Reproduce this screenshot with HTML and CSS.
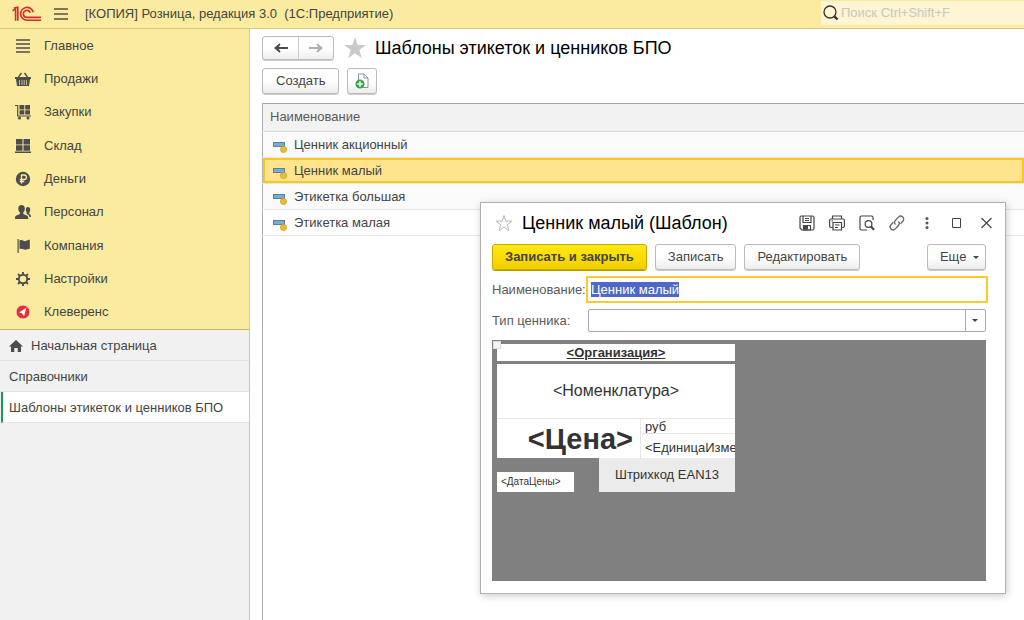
FILE: index.html
```html
<!DOCTYPE html>
<html lang="ru">
<head>
  <meta charset="UTF-8">
  <meta name="viewport" content="width=device-width, initial-scale=1.0">
  <title>Розница, редакция 3.0</title>
  <link rel="stylesheet" href="styles.css">
</head>
<body>
  <header class="topbar">
    <svg class="logo" width="30" height="16" viewBox="0 0 30 16" fill="none" stroke="#e0262b" stroke-width="1.6">
      <path d="M.6 4.800 3.600 2.400V14.800M2 2 5.800 1.200V14.800"/>
      <path d="M21.200 6.200A6.400 6.400 0 1 0 15 14.200H29"/>
      <path d="M18.200 6.800A3.500 3.500 0 1 0 15 11.400H29"/>
    </svg>
    <button class="menu-btn" aria-label="Меню">
      <svg width="14" height="12" viewBox="0 0 14 12" stroke="#55513f" stroke-width="1.300"><path d="M0 1h14M0 6h14M0 11h14"/></svg>
    </button>
    <span class="app-title">[КОПИЯ] Розница, редакция 3.0&nbsp; (1С:Предприятие)</span>
    <label class="search">
      <svg width="16" height="16" viewBox="0 0 16 16" fill="none" stroke="#333"><circle cx="7" cy="7" r="6" stroke-width="1.300"/><path d="m11.500 11.500 3 3" stroke-width="2.400"/></svg>
      <input type="text" placeholder="Поиск Ctrl+Shift+F" aria-label="Поиск">
    </label>
  </header>

  <div class="layout">
    <aside class="sidebar">
      <nav class="sections">
        <a href="#">
          <svg width="16" height="16" viewBox="0 0 16 16" stroke="#4d4d4d" stroke-width="1.600"><path d="M1 2h14M1 6h14M1 10h14M1 14h14"/></svg>
          Главное
        </a>
        <a href="#">
          <svg width="16" height="16" viewBox="0 0 16 16" fill="#4d4d4d"><path d="M0 6h16v2H0zM1 8h14l-1 7H2z"/><path d="m3.500 6 3-4M12.500 6l-3-4" stroke="#4d4d4d" stroke-width="1.300"/><path d="M4.500 9v5M7 9v5M9.200 9v5M11.500 9v5" stroke="#faeb9e" stroke-width=".7"/></svg>
          Продажи
        </a>
        <a href="#">
          <svg width="16" height="16" viewBox="0 0 16 16" fill="#4d4d4d"><path d="M4.500 1h4.800v4.400H4.500zM10.200 1H15v4.400h-4.800zM4.500 6.200h4.800v4.400H4.500zM10.200 6.200H15v4.400h-4.800z"/><path d="M0 1.500h2.700V12H16" fill="none" stroke="#4d4d4d" stroke-width="1.200"/><circle cx="4.500" cy="14" r="1.500"/><circle cx="13" cy="14" r="1.500"/></svg>
          Закупки
        </a>
        <a href="#">
          <svg width="16" height="16" viewBox="0 0 16 16" fill="#4d4d4d"><path d="M1 1h6.500v5.500H1zM8.500 1H15v5.500H8.500zM1 7.200h6.500v5.500H1zM8.500 7.200H15v5.500H8.500zM0 13.600h16V15H0z"/></svg>
          Склад
        </a>
        <a href="#">
          <svg width="16" height="16" viewBox="0 0 16 16"><circle cx="8" cy="8" r="7.200" fill="#4d4d4d"/><path d="M6.500 12.500V4h2.700a2.200 2.200 0 0 1 0 4.500H4.800M4.800 10.500h4.400" fill="none" stroke="#faeb9e" stroke-width="1.300"/></svg>
          Деньги
        </a>
        <a href="#">
          <svg width="16" height="16" viewBox="0 0 16 16" fill="#4d4d4d"><path d="M6.500 1c2.200 0 3.300 1.400 3.300 3.400 0 1.800-.6 3.200-1.500 4v1.500l4 1.800c.8.400 1 1.300 1 3.300H0c0-2 .2-2.900 1-3.300l3.900-1.800V8.400c-1-.8-1.600-2.200-1.600-4C3.300 2.400 4.300 1 6.500 1z"/><path d="M12.800 3c1.600 0 2.400 1 2.400 2.700 0 1.300-.4 2.400-1 3v1.400c1.200.5 1.800 1 1.800 3h-1.500c-.2-1.600-.9-2.300-3-3.300l.3-1c-.5-.6-.9-1.700-.9-3C10.800 4 11.400 3 12.800 3z"/></svg>
          Персонал
        </a>
        <a href="#">
          <svg width="16" height="16" viewBox="0 0 16 16" fill="#4d4d4d"><path d="M2.500 1h1.200v14H2.500zM4.500 2.500c3-1.500 4 1.500 6.300.6 1.500-.6 2-1.300 4-1.300v8.900c-2 0-3 .8-4.300 1-2 .2-3.500-1.800-6-.5z"/></svg>
          Компания
        </a>
        <a href="#">
          <svg width="16" height="16" viewBox="0 0 16 16" fill="none" stroke="#4d4d4d"><circle cx="8" cy="8" r="4.200" stroke-width="1.900"/><path d="M8 1v2.500M8 12.500V15M1 8h2.500M12.500 8H15M3 3l1.800 1.800M11.200 11.200 13 13M13 3l-1.800 1.800M4.800 11.200 3 13" stroke-width="1.900"/></svg>
          Настройки
        </a>
        <a href="#">
          <svg width="16" height="16" viewBox="0 0 16 16"><circle cx="8" cy="8" r="7" fill="#e2322f" stroke="#f3dfe0"/><path d="M11.500 3.500 4 8.500l3 .8 2 3z" fill="#fff"/></svg>
          Клеверенс
        </a>
      </nav>
      <nav class="windows">
        <a href="#">
          <svg width="14" height="12" viewBox="0 0 14 12" fill="#4d4d4d"><path d="M7 0 14 6.500h-2V12H8.700V8H5.300v4H2V6.500H0z"/></svg>
          Начальная страница
        </a>
        <a href="#">Справочники</a>
        <a href="#" class="active">Шаблоны этикеток и ценников БПО</a>
      </nav>
    </aside>

    <main class="content">
      <div class="page-head">
        <div class="history">
          <button aria-label="Назад"><svg width="14" height="10" viewBox="0 0 14 10" fill="#4d4d4d"><path d="M0 5 5.500.3 6.500 1.500 4.800 4H14v2H4.800l1.700 2.500-1 1.200z"/></svg></button>
          <button aria-label="Вперед"><svg width="14" height="10" viewBox="0 0 14 10" fill="#b0b0b0"><path d="M14 5 8.500.3 7.500 1.500 9.200 4H0v2h9.200L7.500 8.500l1 1.200z"/></svg></button>
        </div>
        <svg class="star" width="22" height="22" viewBox="0 0 22 22" fill="#c8cacc"><path d="m11 0 2.700 8H22l-6.700 5 2.600 8.300L11 16.200l-6.900 5.100L6.700 13 0 8h8.300z"/></svg>
        <h1>Шаблоны этикеток и ценников БПО</h1>
      </div>
      <div class="commands">
        <button class="btn">Создать</button>
        <button class="btn btn-icon" aria-label="Создать группу">
          <svg width="14" height="16" viewBox="0 0 14 16"><path d="M3.500 1h5.500l4 4v9.500H3.500z" fill="#fff" stroke="#8296a8"/><path d="M9 1v4h4" fill="none" stroke="#8296a8"/><circle cx="5" cy="11" r="4.500" fill="#35a545"/><path d="M5 8.300v5.400M2.300 11h5.400" stroke="#fff" stroke-width="1.500"/></svg>
        </button>
      </div>
      <table class="list">
        <thead>
          <tr><th>Наименование</th></tr>
        </thead>
        <tbody>
          <tr><td><span class="mark"></span>Ценник акционный</td></tr>
          <tr class="selected"><td><span class="mark"></span>Ценник малый</td></tr>
          <tr><td><span class="mark"></span>Этикетка большая</td></tr>
          <tr><td><span class="mark"></span>Этикетка малая</td></tr>
        </tbody>
      </table>
      <div class="list-rest"></div>
    </main>
  </div>

  <section class="dialog" role="dialog" aria-labelledby="dialogTitle">
    <div class="dialog-head">
      <svg width="18" height="18" viewBox="0 0 18 18" fill="none" stroke="#b4b8bc"><path d="m9 1.500 2 5.700h6l-4.800 3.600 1.800 5.800-5-3.500-5 3.500 1.800-5.800L1 7.200h6z"/></svg>
      <h2 id="dialogTitle">Ценник малый (Шаблон)</h2>
      <div class="tools">
        <button aria-label="Сохранить"><svg width="16" height="16" viewBox="0 0 16 16" fill="none" stroke="#444" stroke-width="1.200"><path d="M1 2.500Q1 1 2.500 1h11Q15 1 15 2.500v11q0 1.500-1.500 1.500H3l-2-2zM4 1v6.500h8V1M6 3.500h4M6 5.500h4"/><path d="M4.500 15v-4.500h7V15z"/><path d="M5 11h4v3.500H5z" fill="#444" stroke="none"/></svg></button>
        <button aria-label="Печать"><svg width="16" height="16" viewBox="0 0 16 16" fill="none" stroke="#444" stroke-width="1.200"><path d="M3.500 4V1h9v3M3.500 12.500H2A1.500 1.500 0 0 1 .6 11V5.500Q.6 4 2 4h12q1.400 0 1.400 1.500V11q0 1.500-1.400 1.500h-1.500M4 7.500h8.500V15H4zM6 10h4.500M6 12.500h3M2.500 6h1.500"/></svg></button>
        <button aria-label="Просмотр"><svg width="16" height="16" viewBox="0 0 16 16" fill="none" stroke="#444" stroke-width="1.200"><path d="M14 5V2.500Q14 1 12.500 1h-10Q1 1 1 2.500v11Q1 15 2.500 15H8"/><circle cx="9.500" cy="9" r="3.400"/><path d="m12 11.500 3 3.300" stroke-width="2.200"/></svg></button>
        <button aria-label="Ссылка"><svg width="16" height="16" viewBox="0 0 16 16" fill="none" stroke="#666" stroke-width="1.300"><path d="M6.500 9.500a3 3 0 0 1 0-4.200l3-3.200a2.900 2.900 0 0 1 4.300 4.200l-2.300 2.400"/><path d="M9.300 6.500a3 3 0 0 1 0 4.200l-3 3.200A2.900 2.900 0 0 1 2 9.700l2.300-2.400"/></svg></button>
        <button aria-label="Еще"><svg width="16" height="16" viewBox="0 0 16 16" fill="#555"><circle cx="8" cy="3.500" r="1.500"/><circle cx="8" cy="8" r="1.500"/><circle cx="8" cy="12.500" r="1.500"/></svg></button>
        <button aria-label="Развернуть"><svg width="16" height="16" viewBox="0 0 16 16" fill="none" stroke="#444"><path d="M3.500 3.500h8v9h-8z"/></svg></button>
        <button aria-label="Закрыть"><svg width="16" height="16" viewBox="0 0 16 16" fill="none" stroke="#444" stroke-width="1.200"><path d="m2.500 3 10 10M12.500 3l-10 10"/></svg></button>
      </div>
    </div>

    <div class="dialog-commands">
      <button class="btn btn-primary">Записать и закрыть</button>
      <button class="btn">Записать</button>
      <button class="btn">Редактировать</button>
      <button class="btn btn-more">Еще <span class="caret"></span></button>
    </div>

    <div class="form">
      <label for="name">Наименование:</label>
      <input type="text" id="name" value="Ценник малый">
      <label for="kind">Тип ценника:</label>
      <div class="combo">
        <select id="kind"><option></option></select>
        <span class="caret"></span>
      </div>
    </div>

    <div class="canvas">
      <div class="tag">
        <div class="org">&lt;Организация&gt;</div>
        <div class="item">&lt;Номенклатура&gt;</div>
        <div class="price">&lt;Цена&gt;</div>
        <div class="currency">руб</div>
        <div class="unit">&lt;ЕдиницаИзме</div>
        <div class="date">&lt;ДатаЦены&gt;</div>
        <div class="barcode">Штрихкод EAN13</div>
      </div>
    </div>
  </section>

  <script>
    const nameField = document.getElementById("name");
    nameField.focus();
    nameField.select();
  </script>
</body>
</html>
```
FILE: styles.css
```css
* {
  box-sizing: border-box;
}

body {
  margin: 0;
  min-height: 100vh;
  display: flex;
  flex-direction: column;
  position: relative;
  font-family: "Liberation Sans", Arial, sans-serif;
  font-size: 13px;
  line-height: 16px;
  color: #444;
  background: #fff;
}

button, input, select {
  font: inherit;
  color: inherit;
}

a {
  color: inherit;
  text-decoration: none;
}

h1, h2 {
  margin: 0;
  font-size: 18px;
  line-height: 24px;
  font-weight: normal;
  color: #000;
}

/* верхняя панель */
.topbar {
  display: flex;
  align-items: center;
  height: 29px;
  padding-left: 12px;
  background: #faeb9e;
  border-bottom: 1px solid #d5c78a;
}

.menu-btn {
  display: flex;
  margin-left: 12px;
  padding: 0;
  border: none;
  background: none;
}

.app-title {
  margin-left: 17px;
}

.search {
  display: flex;
  align-items: center;
  gap: 2px;
  width: 203px;
  height: 24px;
  margin: 0 0 2px auto;
  padding-left: 2px;
  background: #fdf5d3;
}

.search input {
  flex: 1;
  min-width: 0;
  padding: 0;
  border: none;
  outline: none;
  background: none;
}

.search input::placeholder {
  color: #c9c7c0;
}

.layout {
  flex: 1;
  display: flex;
}

/* левая панель */
.sidebar {
  width: 250px;
  background: #f1f1f1;
  border-right: 1px solid #d3c88f;
}

.sections {
  display: grid;
  grid-auto-rows: 1fr;
  height: 301px;
  background: #faeb9e;
  border-bottom: 1px solid #c5b568;
}

.sections a {
  display: flex;
  align-items: center;
  gap: 13px;
  padding-left: 15px;
}

.windows a {
  display: flex;
  align-items: center;
  gap: 8px;
  height: 31px;
  padding: 1px 0 0 9px;
  border-bottom: 1px solid #e2e2e2;
}

.windows .active {
  padding-left: 6px;
  margin-left: 1px;
  background: #fff;
  border-left: 2px solid #0f9d58;
}

/* список */
.content {
  flex: 1;
  min-width: 0;
  display: flex;
  flex-direction: column;
  padding: 7px 0 0 12px;
}

.page-head {
  display: flex;
  align-items: flex-start;
}

.history {
  display: flex;
  height: 24px;
  border: 1px solid #bbb;
  border-radius: 3px;
  background: linear-gradient(#fff 50%, #eee);
  box-shadow: 0 1px 0 #ccc;
}

.history button {
  display: flex;
  align-items: center;
  justify-content: center;
  width: 35px;
  padding: 0;
  border: none;
  background: none;
}

.history button + button {
  border-left: 1px solid #ccc;
}

.star {
  margin: 1px 9px 0 10px;
}

.commands {
  display: flex;
  gap: 8px;
  margin: 8px 0 9px;
}

.btn {
  height: 26px;
  padding: 0 12px;
  border: 1px solid #bbb;
  border-radius: 3px;
  background: linear-gradient(#fff 50%, #ececec);
  box-shadow: 0 1px 0 #ccc;
  white-space: nowrap;
}

.commands .btn {
  padding: 0 13px;
}

.commands .btn-icon {
  display: flex;
  align-items: center;
  padding: 0 7px;
}

.list {
  border-collapse: collapse;
  width: 100%;
}

.list th, .list td {
  height: 26px;
  padding: 0 7px;
  text-align: left;
  font-weight: normal;
  border-left: 1px solid #b0b0b0;
}

.list th {
  height: 28px;
  padding-bottom: 2px;
  color: #5a5a5a;
  background: #f2f2f2;
  border-top: 1px solid #a8a8a8;
  border-bottom: 1px solid #dcdcdc;
}

.list td {
  padding-left: 10px;
  border-bottom: 1px solid #e6e6e6;
}

.list tbody tr:nth-child(odd) {
  background: #fafafa;
}

.list .selected td {
  background: #ffe48f;
  box-shadow: inset 0 0 0 2px #f8c822;
}

.list-rest {
  flex: 1;
  border-left: 1px solid #b0b0b0;
}

.mark {
  display: inline-block;
  position: relative;
  width: 12px;
  height: 5px;
  margin-right: 9px;
  vertical-align: 2px;
  background: #76aed3;
  border: 1px solid #5f7f96;
}

.mark::after {
  content: "";
  position: absolute;
  left: 6px;
  top: 3px;
  width: 5px;
  height: 5px;
  border-radius: 50%;
  background: #efc02d;
  border: 1px solid #cda32c;
}

/* окно шаблона */
.dialog {
  position: absolute;
  top: 202px;
  right: 18px;
  width: 526px;
  padding: 8px 19px 12px 11px;
  background: #fff;
  border: 1px solid #b0b0b0;
  box-shadow: 1px 2px 8px rgba(0, 0, 0, 0.2);
}

.dialog-head {
  display: flex;
  align-items: center;
  gap: 9px;
  padding-left: 3px;
}

.tools {
  display: flex;
  gap: 14px;
  margin: 0 -9px 0 auto;
}

.tools button {
  display: flex;
  padding: 0;
  border: none;
  background: none;
}

.dialog-commands {
  display: flex;
  gap: 8px;
  margin-top: 9px;
}

.btn-primary {
  font-weight: bold;
  border-color: #c9ab00;
  background: linear-gradient(#ffe817, #fadb00 60%, #efcd00);
  box-shadow: 0 1px 0 #b89c00;
}

.btn-more {
  margin-left: auto;
  padding-right: 6px;
}

.caret {
  display: inline-block;
  margin-left: 3px;
  vertical-align: 2px;
  border: 3px solid transparent;
  border-top-color: #444;
  border-bottom: none;
}

.form {
  display: grid;
  grid-template-columns: 94px 1fr;
  grid-template-rows: 27px 23px;
  row-gap: 6px;
  align-items: center;
  margin-top: 6px;
  color: #5a5a5a;
}

.form input {
  height: 27px;
  margin-right: -2px;
  padding: 0 3px;
  border: 2px solid #f8cc2e;
  outline: none;
}

.form input::selection {
  background: #4f68c6;
  color: #fff;
}

.combo {
  position: relative;
  height: 23px;
  margin-left: 2px;
}

.combo select {
  display: block;
  width: 100%;
  height: 100%;
  border: 1px solid #aaa;
  border-radius: 2px;
  background: linear-gradient(#aaa, #aaa) right 19px top / 1px 100% no-repeat #fff;
  appearance: none;
}

.combo .caret {
  position: absolute;
  right: 8px;
  top: 10px;
}

.canvas {
  height: 241px;
  margin-top: 8px;
  padding: 4px 5px;
  background: #808080;
  position: relative;
}

.canvas::before {
  content: "";
  position: absolute;
  left: 1px;
  top: 1px;
  width: 6px;
  height: 6px;
  background: #f4f4f4;
  border: 1px solid #ddd;
}

.tag {
  display: grid;
  grid-template-columns: 77px 25px 42px 94px;
  grid-template-rows: 17px 3px 55px 15px 24px 14px 20px;
  color: #333;
}

.tag div {
  display: flex;
  align-items: center;
  justify-content: center;
  overflow: hidden;
  background: #fff;
}

.tag .org {
  grid-area: 1 / 1 / 2 / 5;
  font-weight: bold;
  text-decoration: underline;
}

.tag .item {
  grid-area: 3 / 1 / 4 / 5;
  font-size: 16px;
  border-bottom: 1px solid #e6e6e6;
}

.tag .price {
  grid-area: 4 / 1 / 6 / 4;
  justify-content: flex-end;
  padding-right: 7px;
  font-size: 29px;
  line-height: 32px;
  font-weight: bold;
  border-right: 1px solid #e6e6e6;
}

.tag .currency {
  grid-area: 4 / 4 / 5 / 5;
  justify-content: flex-start;
  padding: 2px 0 0 4px;
  border-bottom: 1px solid #e6e6e6;
}

.tag .unit {
  grid-area: 5 / 4 / 6 / 5;
  justify-content: flex-start;
  padding: 4px 0 0 4px;
}

.tag .date {
  grid-area: 7 / 1 / 8 / 2;
  justify-content: flex-start;
  padding-left: 4px;
  font-size: 10px;
}

.tag .barcode {
  grid-area: 6 / 2 / 8 / 5;
  margin-left: 25px;
  background: #ebebeb;
}
```
